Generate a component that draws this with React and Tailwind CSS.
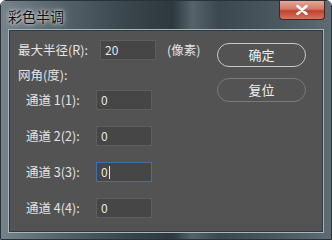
import React from 'react';

const font = { fontFamily: '"Noto Sans CJK SC", "Liberation Sans", sans-serif' };

function Field({ value, focused }) {
  return (
    <div
      className={
        'w-[56px] h-[20px] flex items-center pl-[4px] text-[12px] text-[#e6e6e6] bg-[#464646] border ' +
        (focused ? 'border-[#3f6fae]' : 'border-[#5e5e5e]')
      }
    >
      <span>{value}</span>
      {focused && <span className="w-px h-[13px] bg-[#e6e6e6] ml-px" />}
    </div>
  );
}

function Channel({ n, focused }) {
  return (
    <div className="flex items-center h-[20px]">
      <span className="w-[70px] text-[12.5px] text-[#e4e4e4]">
        通道 {n}({n}):
      </span>
      <Field value="0" focused={focused} />
    </div>
  );
}

function RoundButton({ children, primary }) {
  return (
    <div
      className={
        'w-[89px] h-[24px] rounded-full flex items-center justify-center text-[13px] text-[#f0f0f0] border ' +
        (primary ? 'border-[#c9c9c9] border-[1.5px]' : 'border-[#7a7a7a]')
      }
    >
      {children}
    </div>
  );
}

export default function App() {
  return (
    <div
      className="w-[332px] h-[240px] relative overflow-hidden border border-[#2a3238] rounded-t-[6px]"
      style={font}
    >
      <div className="absolute inset-0 bg-[linear-gradient(90deg,#76828a_0%,#56636b_18%,#3a454c_38%,#2e383e_52%,#56636a_58%,#3c474f_66%,#4c5961_85%,#5e6b73_100%)]" />
      <div className="relative flex flex-col h-full">
        <div className="h-[28px] flex items-start">
          <span className="mt-[5px] ml-[7px] text-[14px] text-[#111] [text-shadow:0_0_6px_#dfe4e6,0_0_3px_#dfe4e6]">
            彩色半调
          </span>
          <div className="ml-auto mr-[6px] w-[46px] h-[19px] rounded-b-[4px] border border-t-0 border-[#3a2a2a] flex items-center justify-center bg-[linear-gradient(180deg,#e7a89c_0%,#d27866_45%,#c24030_55%,#d6745c_100%)]">
            <svg width="12" height="10" viewBox="0 0 12 10">
              <path d="M1.5 1 L10.5 9 M10.5 1 L1.5 9" stroke="#ffffff" strokeWidth="2.6" strokeLinecap="round" />
            </svg>
          </div>
        </div>
        <div className="mx-[7px] h-[204px] border border-[#a4b6c0] p-px bg-[#2f3a40]">
          <div className="h-full bg-[#535353] flex">
            <div className="flex flex-col pl-[8px] pt-[9px]">
              <div className="flex items-center h-[20px] text-[12.5px] text-[#e4e4e4]">
                <span className="w-[82px]">最大半径(R):</span>
                <Field value="20" />
                <span className="ml-[11px]">(像素)</span>
              </div>
              <div className="mt-[5px] h-[20px] flex items-center text-[12.5px] text-[#e4e4e4]">网角(度):</div>
              <div className="flex flex-col gap-[16px] pl-[8px] mt-[5px]">
                <Channel n={1} />
                <Channel n={2} />
                <Channel n={3} focused />
                <Channel n={4} />
              </div>
            </div>
            <div className="ml-auto mr-[16px] pt-[12px] flex flex-col gap-[11px]">
              <RoundButton primary>确定</RoundButton>
              <RoundButton>复位</RoundButton>
            </div>
          </div>
        </div>
      </div>
    </div>
  );
}
